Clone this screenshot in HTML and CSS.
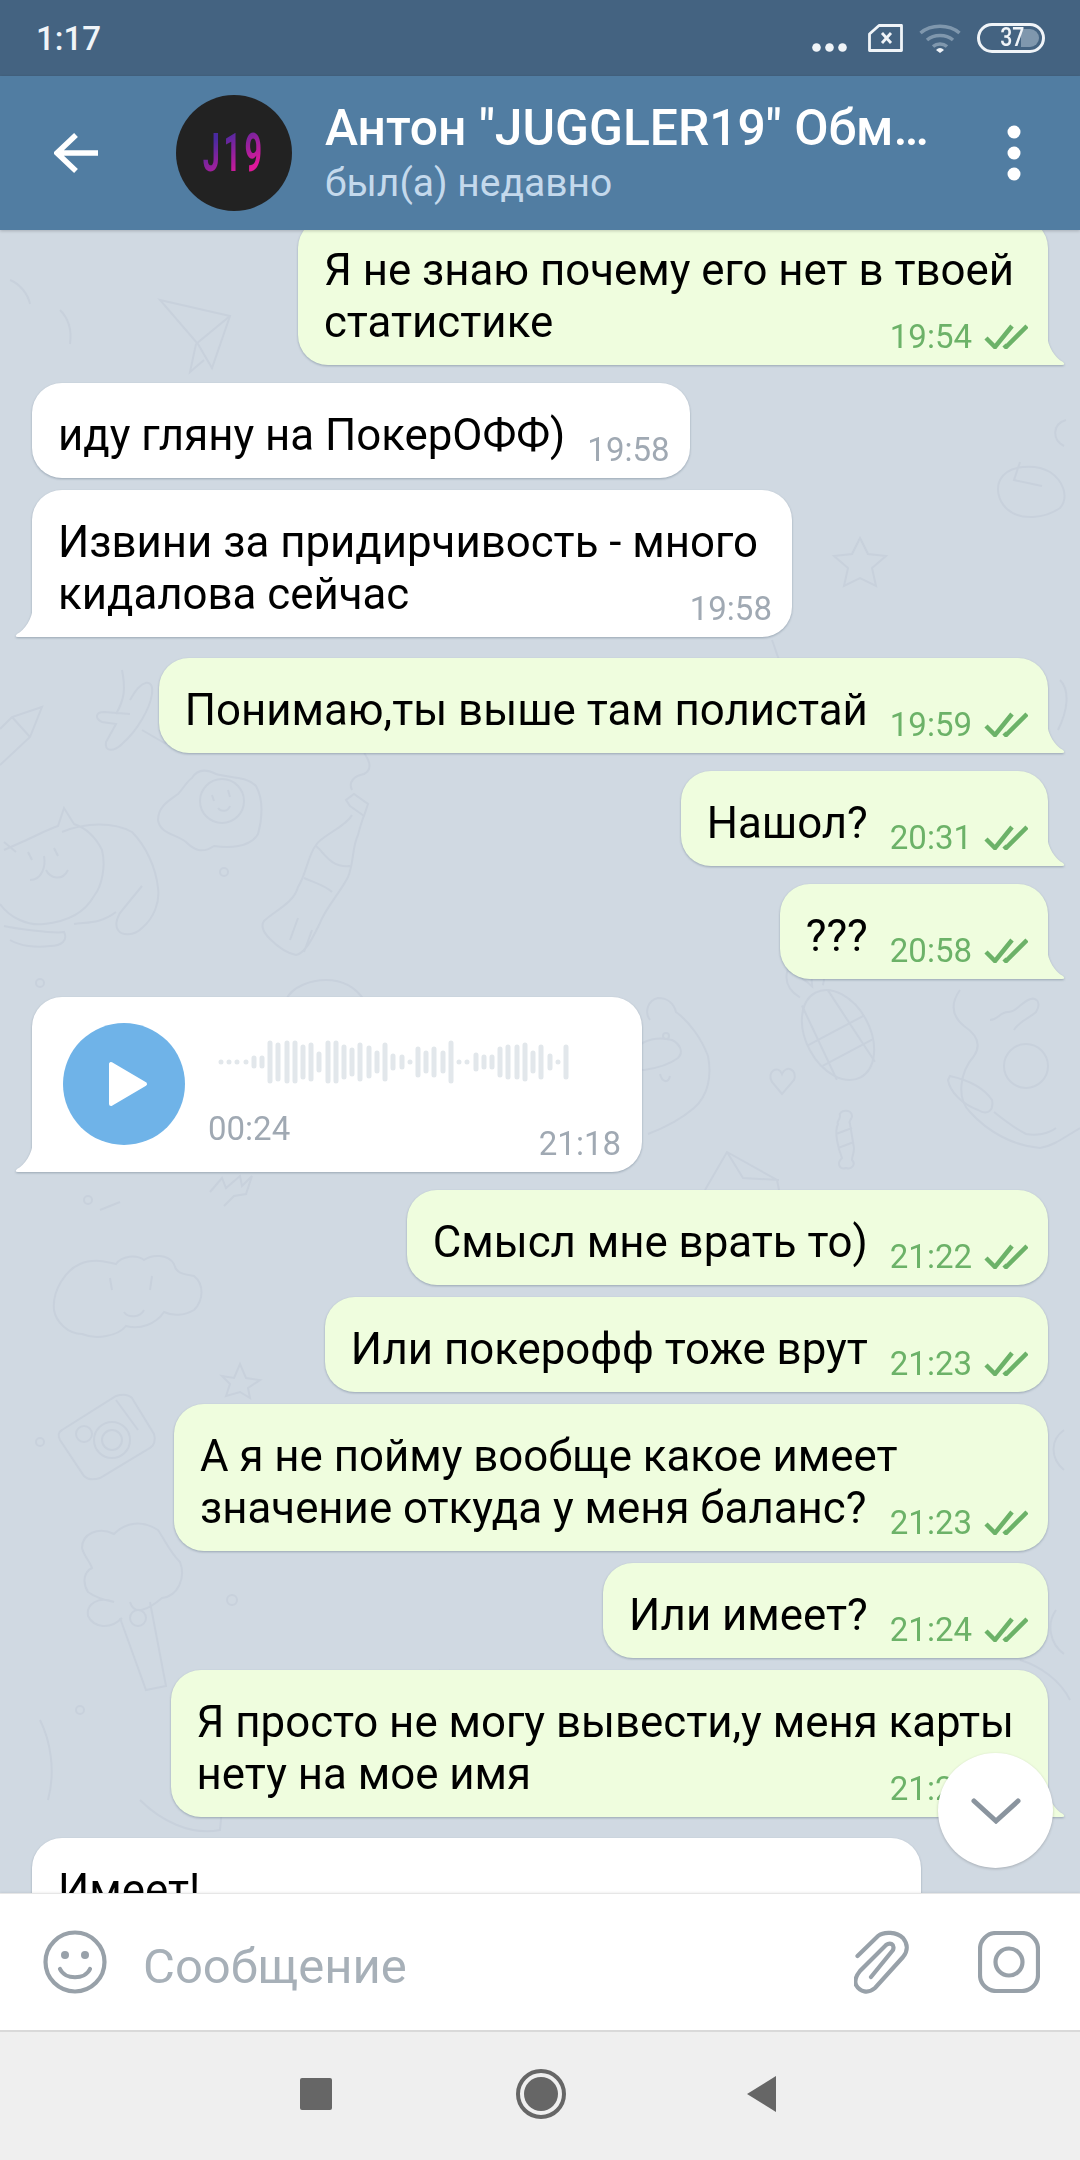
FILE: index.html
```html
<!DOCTYPE html>
<html lang="ru">
<head>
    <meta charset="UTF-8">
    <meta name="viewport" content="width=device-width, initial-scale=1.0">
    <title>Чат</title>
    <link rel="stylesheet" href="styles.css">
</head>
<body>
    <div class="phone">
        <!-- Status bar -->
        <div class="status-bar">
            <span class="clock">1:17</span>
            <div class="status-icons">
                <svg class="ic-dots" viewBox="0 0 35 9"><circle cx="4.500" cy="4.500" r="4.300"/><circle cx="17.500" cy="4.500" r="4.300"/><circle cx="30.500" cy="4.500" r="4.300"/></svg>
                <svg class="ic-sim" viewBox="0 0 36 28"><path d="M11 1.500h22.500v25H1.500V10z"/><path d="M14 9l9 10M23 9l-9 10"/></svg>
                <svg class="ic-wifi" viewBox="0 0 42 30"><path d="M1.500 10C12 1 30 1 40.500 10"/><path d="M8 17c7-6 19-6 26 0"/><path d="M14 23.500c4-3.500 10-3.500 14 0"/><path class="wifi-dot" d="M17 27q4-4 8 0l-4 3z"/></svg>
                <div class="battery"><span class="battery-fill"></span><span class="battery-num">37</span></div>
            </div>
        </div>

        <!-- Chat header -->
        <header class="chat-header">
            <svg class="ic-back" viewBox="0 0 44 42"><path d="M22 3L3 21l19 18M3 21h41"/></svg>
            <div class="avatar"><span class="avatar-text">J19</span></div>
            <div class="peer">
                <div class="peer-name">Антон "JUGGLER19" Обм…</div>
                <div class="peer-status">был(а) недавно</div>
            </div>
            <svg class="ic-menu" viewBox="0 0 14 56"><circle cx="7" cy="7" r="6.500"/><circle cx="7" cy="28" r="6.500"/><circle cx="7" cy="49" r="6.500"/></svg>
        </header>

        <!-- Messages -->
        <main class="messages">
            <svg class="doodles" viewBox="0 230 1080 1663">
                <!-- pencil, plane -->
                <path d="M0 765l30-28 12-30-30 10-12 12M12 717l18 20"/>
                <path d="M122 670c4 20 2 30-6 44M130 700c12-22 24-22 22-6-2 14-14 36-30 50-8 8-18 8-16-2l10-18-14-2c-8-4-6-10 2-10l26 2M142 730l24 14"/>
                <!-- fried egg -->
                <path d="M192 778c6-10 16-8 24-4 14 4 30 2 40 12 8 14 6 34 2 48-8 14-30 14-44 12-12 8-20 4-28-4-10-8-26-8-28-22 0-14 12-20 20-26 6-6 8-12 14-16z"/>
                <circle cx="222" cy="801" r="22"/>
                <path d="M212 795l2 6M228 790l2 7M218 808c3 4 10 4 12-2"/>
                <!-- bottle -->
                <path d="M350 806l14 10 4-12-14-10-8 6zM352 815c-6 12-30 20-36 30-8 10-10 30-18 42-4 16-24 24-34 34-4 6 0 12 6 18 8 8 16 14 26 16 10-2 18-20 24-32 6-16 20-30 28-46 6-14 4-30 10-42 2-8 4-14 6-20M304 878c14 6 22 8 28 14M298 918l-8 22M312 930l-8 22M316 846c8 6 14 22 34 20"/>
                <path d="M352 790c-4-8 2-14 12-16 8-4 6-12 2-18-6-8 6-14 16-18 10-6 4-18-8-22-12-2-30 0-44 4-10 6-18 10-14 20 6 8 22 8 30 2"/>
                <!-- cat -->
                <path d="M4 850l18-8c14-6 24-12 36-16l6-18 10 16c12 4 22 14 28 26 4 16 0 36-8 46-10 18-30 26-50 28-16 2-34-6-44-20M4 842l12 10M62 832c24-10 52-10 70 0 14 14 24 36 26 56 2 14-4 30-16 40-8 8-20 8-24 2-4-6 0-16 6-22l18-22M4 926c8 2 50 8 60 6 4 8-2 14-14 14-14 2-30 0-40-6M74 924c14-2 26 0 42-12"/>
                <path d="M28 852l4 8M54 848l4 8M44 856c2 10-2 24-14 24M46 870c4 8 16 12 22 0"/>
                <circle cx="224" cy="872" r="4"/><circle cx="40" cy="983" r="4"/>
                <!-- burger -->
                <path d="M286 1000c6-14 26-20 40-20 18 0 30 8 38 20"/>
                <!-- bear -->
                <path d="M650 1020c-6-8-2-20 8-22 10 0 16 6 18 14 14 10 26 28 32 44 4 20 0 40-14 52-14 12-30 20-46 26"/>
                <path d="M672 1040c-14-4-28 0-36 8-6 10-2 22 8 22 14-2 26-6 34-12 6-6 2-14-6-18z"/>
                <circle cx="666" cy="1036" r="3"/><path d="M660 1074c2 8 8 10 10 2"/>
                <!-- pineapple -->
                <g transform="rotate(-28 838 1035)">
                    <ellipse cx="838" cy="1035" rx="32" ry="48"/>
                    <path d="M806 1030h64M810 1055h56M820 992l-4 82M850 990l8 86M822 984c-8-14-4-24 2-30 6 8 10 14 14 26 4-10 8-18 16-24 4 8 2 20-6 28"/>
                </g>
                <path d="M782 1094l-10-12c-6-10 6-18 10-8 4-10 16-4 12 6z"/>
                <path d="M840 1116c-2-6 12-8 12 0 0 4-4 4-2 8l4 24c0 6-2 8-2 12 4 4 0 10-6 8-6 2-10-4-4-10-4-10-8-26-4-34-2-2 2-4 2-8zM836 1134l16-6M838 1148l16-6"/>
                <!-- envelope -->
                <path d="M705 1190l22-38 50 28 2 10M727 1152l16 26 36 2"/>
                <!-- bird with banana -->
                <path d="M960 990c-10 14-8 26 4 36 12 8 18 18 10 30-14 16-18 42-4 56 18 20 44 34 70 36 14-2 26-12 40-20"/>
                <circle cx="1026" cy="1066" r="22"/>
                <path d="M950 1076c18 4 34 12 42 24 2 10-4 16-14 10-16-6-28-18-30-30zM990 1020c8 0 10-8 18-8s12-8 20-12 14 2 8 12c-6 6-16 8-22 18M994 1112c10 8 20 16 32 22 10 2 22 0 30-6"/>
                <!-- cloud -->
                <path d="M54 1310c-2-20 12-40 26-46 14-6 28-2 36 0 6-8 20-10 28-4 8-6 24-6 30 4 2 10 10 10 20 12 10 8 10 24 0 34-10 6-22 6-30 2-8 12-24 18-38 14-8 10-30 14-44 8-14 0-26-12-28-24z"/>
                <path d="M110 1278l2 12M152 1276l-2 14M124 1312c4 6 16 6 20-2"/>
                <!-- camera -->
                <path d="M62 1430l54-34c6-2 12-2 16 2l22 36c2 6 0 12-4 14l-50 30c-6 2-12 2-16-2l-24-36c-2-4-2-8 2-10z"/>
                <circle cx="112" cy="1440" r="18"/><circle cx="112" cy="1440" r="10"/><circle cx="84" cy="1434" r="8"/><path d="M116 1400l22 30"/>
                <circle cx="40" cy="1442" r="4"/><circle cx="232" cy="1600" r="5"/><circle cx="80" cy="1710" r="4"/><circle cx="88" cy="1200" r="4"/>
                <!-- mushroom cloud -->
                <path d="M130 1602c4 14 18 8 32-4 16-2 24-20 18-36-10-10-14-20-22-32-16-10-32-8-44 4-16-8-32 0-32 14 2 8 8 14 10 20-8 4-10 14-4 24 8 6 16 8 26 10-16-6-28 2-26 14 6 12 22 14 34 2"/>
                <path d="M120 1618l26 72 20-4-16-84"/><circle cx="138" cy="1618" r="8"/>
                <!-- paper plane, star, misc -->
                <path d="M160 300l70 16-18 52-14-24-38-44zM196 344l-6 28 14-12M196 344l34-28"/>
                <path d="M60 310c8 8 12 20 10 34M10 280c10 4 18 14 20 24"/>
                <path d="M100 1210l20-8M210 1192l12-14 4 10 14-12 2 10 10-10-6 18-12 2 -10 10"/>
                <path d="M234 1378l6-14 6 14 14 2-12 8 2 10-10-6-14 4 4-12-8-8z"/>
                <path d="M860 538l8 16 18 2-14 12 4 18-16-8-16 8 4-18-14-12 18-2z"/>
                <path d="M780 660c-4 20-30 26-50 14 30 0 44-14 50-14zM772 640c4 10 6 20 8 20"/>
                <path d="M1000 480c8-16 36-16 50-8 12 8 20 24 10 36-14 10-40 14-54 0-8-8-10-20-6-28zM1020 462l-6 18 28 6"/>
                <path d="M1060 680c10 10 8 30-2 50M1066 420c-14 4-14 20-2 26"/>
                <path d="M1020 1660c20 6 40 20 50 40M880 1760c30-10 70-4 90 16 8 14 0 30-20 34"/>
                <path d="M190 1720c26 30 36 60 30 110-30 6-60-10-80-30M40 1720c10 20 16 50 8 80"/>
                <path d="M440 1670c-8 10-14 30-6 50"/>
                <path d="M1064 1430c-14 10-14 28 0 40M1056 1610c-10 14-6 34 8 44"/>
            </svg>

            <div class="bubble out multi tail first">
                <p class="text">Я не знаю почему его нет в твоей<br>статистике</p>
                <div class="meta"><span class="time">19:54</span><svg class="ticks" viewBox="0 0 44 26"><path d="M2 15l9 9L28 3M20 22l2 2L43 3"/></svg></div>
            </div>
            <div class="bubble in">
                <p class="text">иду гляну на ПокерОФФ)</p>
                <div class="meta"><span class="time">19:58</span></div>
            </div>
            <div class="bubble in multi tail gap-sm">
                <p class="text">Извини за придирчивость - много<br>кидалова сейчас</p>
                <div class="meta"><span class="time">19:58</span></div>
            </div>
            <div class="bubble out tail gap-lg">
                <p class="text">Понимаю,ты выше там полистай</p>
                <div class="meta"><span class="time">19:59</span><svg class="ticks" viewBox="0 0 44 26"><path d="M2 15l9 9L28 3M20 22l2 2L43 3"/></svg></div>
            </div>
            <div class="bubble out tail">
                <p class="text">Нашол?</p>
                <div class="meta"><span class="time">20:31</span><svg class="ticks" viewBox="0 0 44 26"><path d="M2 15l9 9L28 3M20 22l2 2L43 3"/></svg></div>
            </div>
            <div class="bubble out tail">
                <p class="text">???</p>
                <div class="meta"><span class="time">20:58</span><svg class="ticks" viewBox="0 0 44 26"><path d="M2 15l9 9L28 3M20 22l2 2L43 3"/></svg></div>
            </div>

            <!-- Voice message -->
            <div class="bubble in tail voice">
                <div class="play"><svg viewBox="0 0 40 46"><path d="M3 3v40l34-20z"/></svg></div>
                <div class="voice-body">
                    <svg class="wave" viewBox="0 0 352 44"><path d="M3 22v.1M11 22v.1M19 22v.1M28 22v.1M36 18v8M44 18v8M52 3v38M60 5v34M69 3v38M77 3v38M85 7v30M93 5v34M101 14v16M110 3v38M118 3v38M126 7v30M134 10v24M142 5v34M151 8v28M159 13v18M167 5v34M175 16v12M184 17v10M192 22v.1M200 9v26M208 13v18M216 9v26M225 13v18M233 3v38M241 22v.1M249 22v.1M258 15v14M266 17v10M274 17v10M282 9v26M290 7v30M299 7v30M307 5v34M315 13v18M323 7v30M332 16v12M340 22v.1M348 7v30"/></svg>
                    <span class="voice-len">00:24</span>
                </div>
                <div class="meta"><span class="time">21:18</span></div>
            </div>

            <div class="bubble out">
                <p class="text">Смысл мне врать то)</p>
                <div class="meta"><span class="time">21:22</span><svg class="ticks" viewBox="0 0 44 26"><path d="M2 15l9 9L28 3M20 22l2 2L43 3"/></svg></div>
            </div>
            <div class="bubble out gap-sm">
                <p class="text">Или покерофф тоже врут</p>
                <div class="meta"><span class="time">21:23</span><svg class="ticks" viewBox="0 0 44 26"><path d="M2 15l9 9L28 3M20 22l2 2L43 3"/></svg></div>
            </div>
            <div class="bubble out multi wide gap-sm">
                <p class="text">А я не пойму вообще какое имеет<br>значение откуда у меня баланс?</p>
                <div class="meta"><span class="time">21:23</span><svg class="ticks" viewBox="0 0 44 26"><path d="M2 15l9 9L28 3M20 22l2 2L43 3"/></svg></div>
            </div>
            <div class="bubble out gap-sm">
                <p class="text">Или имеет?</p>
                <div class="meta"><span class="time">21:24</span><svg class="ticks" viewBox="0 0 44 26"><path d="M2 15l9 9L28 3M20 22l2 2L43 3"/></svg></div>
            </div>
            <div class="bubble out multi tail gap-sm">
                <p class="text">Я просто не могу вывести,у меня карты<br>нету на мое имя</p>
                <div class="meta"><span class="time">21:24</span><svg class="ticks" viewBox="0 0 44 26"><path d="M2 15l9 9L28 3M20 22l2 2L43 3"/></svg></div>
            </div>
            <div class="bubble in last gap-lg">
                <p class="text">Имеет!</p>
            </div>

            <button class="to-bottom"><svg viewBox="0 0 50 26"><path d="M3 3l22 20L47 3"/></svg></button>
        </main>

        <!-- Composer -->
        <div class="composer">
            <svg class="ic-emoji" viewBox="0 0 64 64"><circle cx="32" cy="32" r="29.500"/><circle cx="22" cy="25" r="4" class="solid"/><circle cx="42" cy="25" r="4" class="solid"/><path d="M17 39c5 11 25 11 30 0"/></svg>
            <span class="placeholder">Сообщение</span>
            <svg class="ic-clip" viewBox="0 0 56 64"><path d="M3.500 26L24 6c6-5 19-4 25 2 5 6 5 13 0 19L21 58c-7 6-15 4-19-3-2-5 0-9 4-14L32 15c4-3 9-1 7 5L17 47"/></svg>
            <svg class="ic-camera" viewBox="0 0 62 62"><rect x="2" y="2" width="58" height="58" rx="16"/><circle cx="31" cy="31" r="13.500"/></svg>
        </div>

        <!-- Navigation bar -->
        <nav class="nav-bar">
            <span class="nav-square"></span>
            <svg class="nav-home" viewBox="0 0 50 50"><circle cx="25" cy="25" r="23" class="ring"/><circle cx="25" cy="25" r="17" class="solid"/></svg>
            <svg class="nav-back" viewBox="0 0 32 36"><path d="M31 0v36L2 18z"/></svg>
        </nav>
    </div>
</body>
</html>
```

FILE: styles.css
```css
* {
    box-sizing: border-box;
}

body {
    margin: 0;
    font-family: 'Roboto', 'Noto Sans', sans-serif;
    background-color: #d0d9e2;
}

.phone {
    width: 1080px;
    height: 2160px;
    display: flex;
    flex-direction: column;
    overflow: hidden;
}

/* Status bar */
.status-bar {
    height: 76px;
    flex: none;
    background-color: #446381;
    display: flex;
    align-items: center;
    justify-content: space-between;
    padding: 0 35px 0 36px;
    color: #f0f4f8;
}

.clock {
    font-size: 33px;
    font-weight: 500;
}

.status-icons {
    display: flex;
    align-items: center;
}

.ic-dots {
    width: 35px;
    height: 9px;
    fill: #f0f4f8;
    margin: 19px 21px 0 0;
}

.ic-sim {
    width: 36px;
    height: 28px;
    fill: none;
    stroke: #f0f4f8;
    stroke-width: 2.8;
    stroke-linejoin: round;
    margin: 0 15px 0 0;
}

.ic-wifi {
    width: 42px;
    height: 30px;
    fill: none;
    stroke: #7f97ad;
    stroke-width: 3.5;
    margin-right: 16px;
}

.ic-wifi .wifi-dot {
    fill: #f0f4f8;
    stroke: none;
}

.battery {
    position: relative;
    width: 68px;
    height: 30px;
    border: 3px solid #f0f4f8;
    border-radius: 15px;
    padding: 3px;
    display: flex;
    justify-content: flex-end;
}

.battery-fill {
    width: 18px;
    background-color: #7f97ad;
    border-radius: 0 10px 10px 0;
}

.battery-num {
    position: absolute;
    left: 18px;
    top: -3px;
    font-size: 25px;
    font-weight: 500;
    line-height: 30px;
    transform: scaleX(.85);
}

/* Chat header */
.chat-header {
    height: 154px;
    flex: none;
    background-color: #517da2;
    display: flex;
    align-items: center;
    position: relative;
    z-index: 2;
    box-shadow: 0 1px 3px rgba(0, 0, 0, 0.2);
}

.ic-back {
    width: 44px;
    height: 42px;
    margin-left: 54px;
    fill: none;
    stroke: #fff;
    stroke-width: 5.5;
}

.avatar {
    width: 116px;
    height: 116px;
    margin-left: 78px;
    border-radius: 50%;
    background-color: #222;
    display: flex;
    align-items: center;
    justify-content: center;
}

.avatar-text {
    font-size: 53px;
    font-weight: 700;
    letter-spacing: 6px;
    background: linear-gradient(160deg, #4a2aa0 25%, #e0189a 75%);
    -webkit-background-clip: text;
    background-clip: text;
    color: transparent;
    transform: scaleX(.58);
}

.peer {
    margin-left: 33px;
    flex: 1;
}

.peer-name {
    font-size: 49.8px;
    font-weight: 500;
    line-height: 52px;
    color: #fff;
    white-space: nowrap;
}

.peer-status {
    font-size: 39px;
    line-height: 44px;
    margin-top: 7px;
    color: #c4d9ec;
}

.ic-menu {
    width: 14px;
    height: 56px;
    margin-right: 59px;
    fill: #fff;
}

/* Messages */
.messages {
    position: relative;
    height: 1663px;
    flex: none;
    overflow: hidden;
    display: flex;
    flex-direction: column;
    align-items: flex-start;
    padding: 0 32px;
}

.doodles {
    position: absolute;
    left: 0;
    top: 0;
    width: 1080px;
    height: 1663px;
    fill: none;
    stroke: #c8d1dc;
    stroke-width: 2;
}

.bubble {
    position: relative;
    display: flex;
    flex: none;
    margin-top: 18px;
    padding: 26px 20px 17px 26px;
    border-radius: 30px;
    filter: drop-shadow(0 1px 1px rgba(70, 90, 110, 0.4));
}

.bubble.gap-sm {
    margin-top: 12px;
}

.bubble.gap-lg {
    margin-top: 21px;
}

.bubble.first {
    margin-top: -12px;
}

.bubble.in {
    background-color: #fff;
    color: #a0a9b3;
}

.bubble.out {
    background-color: #effdde;
    align-self: flex-end;
    color: #6cb268;
}

.bubble.multi {
    flex-direction: column;
    padding-right: 34px;
}

.bubble.wide {
    width: 874px;
    padding-right: 20px;
}

.text {
    margin: 0;
    font-size: 43.8px;
    line-height: 52px;
    color: #000;
    white-space: nowrap;
}

.meta {
    display: flex;
    align-items: center;
    height: 40px;
    align-self: flex-end;
    margin: 0 0 -8px 22px;
}

.multi .meta {
    margin-top: -32px;
    margin-right: -14px;
}

.wide .meta {
    margin-right: 0;
}

.time {
    font-size: 33px;
}

.ticks {
    width: 44px;
    height: 26px;
    margin-left: 12px;
    fill: none;
    stroke: #6cb268;
    stroke-width: 4.5;
}

/* Bubble tails */
.bubble.tail::after {
    content: "";
    position: absolute;
    bottom: 0;
    width: 18px;
    height: 30px;
    background-color: inherit;
}

.bubble.out.tail {
    border-bottom-right-radius: 0;
}

.bubble.out.tail::after {
    right: -17px;
    clip-path: path('M0 0C1 12 8 23 16 27Q19 30 15 30L0 30Z');
}

.bubble.in.tail {
    border-bottom-left-radius: 0;
}

.bubble.in.tail::after {
    left: -17px;
    clip-path: path('M18 0C17 12 10 23 2 27Q-1 30 3 30L18 30Z');
}

/* Voice message */
.voice {
    width: 610px;
    height: 175px;
    padding: 26px 20px 0 31px;
}

.play {
    width: 122px;
    height: 122px;
    flex: none;
    border-radius: 50%;
    background-color: #6fb3e8;
    display: flex;
    align-items: center;
    justify-content: center;
}

.play svg {
    width: 40px;
    height: 46px;
    margin-left: 8px;
    fill: #fff;
    stroke: #fff;
    stroke-width: 4;
    stroke-linejoin: round;
}

.voice-body {
    display: flex;
    flex-direction: column;
    align-items: flex-start;
    margin-left: 26px;
}

.wave {
    width: 352px;
    height: 44px;
    margin: 17px 0 0 7px;
    stroke: #e2e7eb;
    stroke-width: 5;
    stroke-linecap: round;
    fill: none;
}

.voice-len {
    font-size: 33px;
    line-height: 40px;
    margin-top: 25px;
    margin-left: -3px;
}

.voice .meta {
    position: absolute;
    right: 21px;
    bottom: 9px;
    margin: 0;
}

.last {
    width: 889px;
    height: 100px;
}

/* Scroll to bottom button */
.to-bottom {
    position: absolute;
    left: 938px;
    top: 1523px;
    width: 115px;
    height: 115px;
    padding: 0;
    border: none;
    border-radius: 50%;
    background-color: #fff;
    box-shadow: 0 1px 3px rgba(0, 0, 0, 0.2);
    display: flex;
    align-items: center;
    justify-content: center;
}

.to-bottom svg {
    width: 50px;
    height: 26px;
    fill: none;
    stroke: #8a949e;
    stroke-width: 5;
    stroke-linecap: round;
}

/* Composer */
.composer {
    height: 137px;
    flex: none;
    position: relative;
    z-index: 1;
    background-color: #fff;
    border-top: 1px solid #e6e6e6;
    box-shadow: 0 -1px 2px rgba(0, 0, 0, 0.06);
    display: flex;
    align-items: center;
    padding: 0 40px 0 43px;
}

.composer svg {
    fill: none;
    stroke: #98a1a9;
    stroke-width: 4.2;
    stroke-linecap: round;
}

.composer .solid {
    fill: #98a1a9;
    stroke: none;
}

.ic-emoji {
    width: 64px;
    height: 64px;
}

.placeholder {
    flex: 1;
    margin: 8px 0 0 36px;
    font-size: 49px;
    color: #a7b0b8;
}

.ic-clip {
    width: 56px;
    height: 64px;
}

.ic-camera {
    width: 62px;
    height: 62px;
    margin-left: 68px;
}

/* Navigation bar */
.nav-bar {
    height: 130px;
    flex: none;
    position: relative;
    z-index: 1;
    background-color: #efefef;
    border-top: 2px solid #d9d9d9;
    display: flex;
    align-items: center;
    padding: 0 0 4px 300px;
}

.nav-square {
    width: 32px;
    height: 32px;
    border-radius: 2px;
    background-color: #666;
}

.nav-home {
    width: 50px;
    height: 50px;
    margin-left: 184px;
}

.nav-home .ring {
    fill: none;
    stroke: #666;
    stroke-width: 4;
}

.nav-home .solid {
    fill: #666;
}

.nav-back {
    width: 32px;
    height: 36px;
    margin-left: 179px;
    fill: #666;
}
```
